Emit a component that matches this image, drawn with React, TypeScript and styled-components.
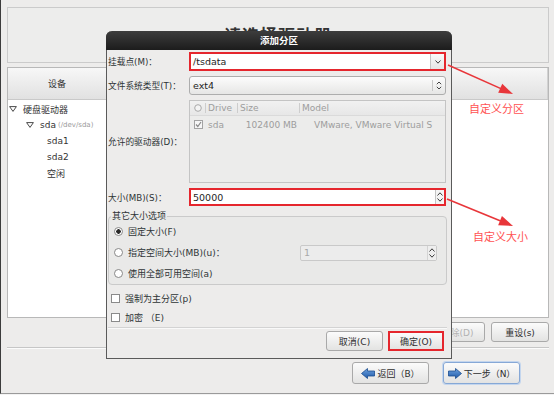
import React from 'react'
import styled, { createGlobalStyle } from 'styled-components'

const GlobalStyle = createGlobalStyle`
  html, body { margin: 0; padding: 0; background: #f3f3f3; }
  body {
    font-family: "DejaVu Sans", "Noto Sans CJK SC", sans-serif;
    font-size: 9px;
    color: #2e3436;
  }
  * { box-sizing: border-box; }
`

const CJK = `"DejaVu Sans", "Noto Sans CJK SC", sans-serif`
const RED = '#e5262d'

const Screen = styled.div`
  position: relative;
  width: 554px;
  height: 394px;
  padding: 7px 5px 0 6px;
  background: #edeceb;
  border-left: 1px solid #3c3c3c;
  border-bottom: 1px solid #9a9a9a;
  display: flex;
  flex-direction: column;
  overflow: hidden;
`

const Banner = styled.div`
  height: 56px;
  border: 1px solid #cbcbcb;
  background: #ededec;
  display: flex;
  justify-content: center;
  padding-top: 18px;
`

// sits behind the dialog, only its top edge peeks out
const BannerTitle = styled.h1`
  margin: 0;
  font: bold 17px/20px ${CJK};
  color: #333;
  letter-spacing: 1px;
`

const DevicePanel = styled.div`
  margin-top: 4px;
  height: 251px;
  border: 1px solid #b8b8b8;
  background: #fff;
  display: flex;
  flex-direction: column;
`

const TreeHeader = styled.div`
  height: 32px;
  flex: none;
  display: flex;
  background: linear-gradient(#f7f7f7, #e1e1e1);
  border-bottom: 1px solid #c9c9c9;
`

const HeaderCell = styled.div<{ $w?: number }>`
  width: ${p => (p.$w ? `${p.$w}px` : 'auto')};
  flex: ${p => (p.$w ? 'none' : '1')};
  display: flex;
  align-items: center;
  justify-content: center;
  border-right: 1px solid #d2d2d2;
  color: #333;
`

const TreeBody = styled.div`
  padding-top: 1px;
  display: flex;
  flex-direction: column;
`

const TreeRow = styled.div<{ $indent: number }>`
  height: 16px;
  display: flex;
  align-items: center;
  gap: 6px;
  padding-left: ${p => p.$indent}px;
  color: #333;
`

const DevPath = styled.span`
  font-size: 7px;
  color: #9a9a9a;
  margin-left: -4px;
`

const ActionRow = styled.div`
  margin-top: 4px;
  height: 20px;
  display: flex;
  justify-content: flex-end;
  gap: 6px;
`

const Separator = styled.div`
  margin-top: 5px;
  border-top: 1px solid #c6c6c6;
  border-bottom: 1px solid #fbfbfb;
`

const NavRow = styled.div`
  margin-top: 13px;
  height: 22px;
  display: flex;
  justify-content: flex-end;
  gap: 14px;
  padding-right: 29px;
`

const PushButton = styled.button<{ $w: number; $focus?: boolean; $mark?: boolean; $off?: boolean }>`
  width: ${p => p.$w}px;
  height: 100%;
  padding: 0;
  display: flex;
  align-items: center;
  justify-content: center;
  gap: 2px;
  font: 9px ${CJK};
  color: ${p => (p.$off ? '#b2b2b2' : '#2e2e2e')};
  background: linear-gradient(#fbfbfb, #e3e3e2);
  border: ${p => (p.$mark ? `2px solid ${RED}` : p.$focus ? '1px solid #86a8d6' : '1px solid #a9a9a9')};
  border-radius: ${p => (p.$mark ? '0' : '3px')};
  box-shadow: ${p => (p.$focus ? '0 0 0 1px #c4d6ee' : 'none')};
`

/* dialog */

const Dialog = styled.div`
  position: absolute;
  left: 105px;
  top: 31px;
  width: 346px;
  height: 328px;
  background: #edeceb;
  border: 1px solid #5a5a5a;
  border-top: none;
  border-radius: 6px 6px 0 0;
  display: flex;
  flex-direction: column;
`

const TitleBar = styled.div`
  height: 19px;
  flex: none;
  margin: 0 -1px;
  border-radius: 6px 6px 0 0;
  background: linear-gradient(#3d3d3d, #1c1c1c);
  color: #fff;
  font: bold 9.5px/19px ${CJK};
  text-align: center;
`

const DialogBody = styled.div`
  flex: 1;
  padding: 2px 4px 0 1px;
  display: flex;
  flex-direction: column;
`

const FormGrid = styled.div`
  display: grid;
  grid-template-columns: 81px 257px;
  grid-template-rows: 19px 19px 83px 18px;
  row-gap: 5px;
  align-items: center;
`

const FieldLabel = styled.label`
  white-space: nowrap;
  font-size: 8.7px;
  color: #2e3436;
`

const MarkedEntry = styled.div`
  height: 100%;
  display: flex;
  border: 2px solid ${RED};
  background: #fff;
`

const EntryText = styled.span`
  flex: 1;
  padding-left: 2px;
  display: flex;
  align-items: center;
  font-size: 9.5px;
  color: #1e1e1e;
`

const DropButton = styled.span`
  width: 14px;
  border-left: 1px solid #c4c4c4;
  background: linear-gradient(#fafafa, #e5e5e5);
  display: flex;
  align-items: center;
  justify-content: center;
`

const SpinColumn = styled.span<{ $off?: boolean }>`
  width: 9px;
  border-left: 1px solid ${p => (p.$off ? '#d3d3d3' : '#c4c4c4')};
  background: ${p => (p.$off ? '#eeeeee' : '#f4f4f4')};
  display: flex;
  flex-direction: column;
  align-items: center;
  justify-content: space-evenly;
`

const ComboButton = styled.div`
  height: 100%;
  display: flex;
  border: 1px solid #adadad;
  border-radius: 3px;
  background: linear-gradient(#fcfcfc, #e6e6e5);
`

const ComboValue = styled.span<{ $off?: boolean }>`
  flex: 1;
  padding-left: 3px;
  display: flex;
  align-items: center;
  font-size: 9.5px;
  color: ${p => (p.$off ? '#a8a8a8' : '#1e1e1e')};
`

const ComboArrows = styled.span`
  width: 13px;
  margin: 3px 0;
  border-left: 1px solid #c8c8c8;
  display: flex;
  align-items: center;
  justify-content: center;
`

const DriveTable = styled.div`
  height: 100%;
  border: 1px solid #c4c4c4;
  background: #ececeb;
  color: #9d9d9d;
  display: flex;
  flex-direction: column;
`

const DriveHead = styled.div`
  height: 15px;
  display: flex;
  border-bottom: 1px solid #dadada;
  background: linear-gradient(#f1f1f1, #e7e7e7);
`

const DriveRow = styled.div`
  height: 17px;
  display: flex;
`

const Cell = styled.span<{ $w?: number; $pad?: number; $right?: boolean; $center?: boolean; $sep?: boolean }>`
  width: ${p => (p.$w ? `${p.$w}px` : 'auto')};
  flex: ${p => (p.$w ? 'none' : '1')};
  display: flex;
  align-items: center;
  justify-content: ${p => (p.$center ? 'center' : p.$right ? 'flex-end' : 'flex-start')};
  padding: ${p => (p.$right ? `0 ${p.$pad ?? 2}px 0 0` : `0 0 0 ${p.$pad ?? 2}px`)};
  white-space: nowrap;
  overflow: hidden;
  border-right: ${p => (p.$sep ? '1px solid #cdcdcd' : 'none')};
  margin: ${p => (p.$sep ? '2px 0' : '0')};
`

const SizeFrame = styled.fieldset`
  margin: 5px 0 0;
  padding: 0 9px 1px 5px;
  border: 1px solid #cacaca;
  border-radius: 4px;
  background: #e9e9e8;
  display: grid;
  grid-auto-rows: 19px;
  row-gap: 2px;
`

const FrameLegend = styled.legend`
  margin-left: -3px;
  padding: 0 1px;
  line-height: 11px;
  color: #2e3436;
`

const OptionRow = styled.label`
  display: flex;
  align-items: center;
  gap: 5px;
`

const RadioDot = styled.span<{ $on?: boolean }>`
  width: 9px;
  height: 9px;
  border-radius: 50%;
  border: 1px solid #8a8a8a;
  background: radial-gradient(circle, ${p => (p.$on ? '#2a2a2a 0 2px' : '#fff 0 2px')}, #fff 2.5px);
  flex: none;
`

const CheckBox = styled.span`
  width: 9px;
  height: 9px;
  border: 1px solid #8a8a8a;
  background: #fff;
  flex: none;
`

const DisabledSpin = styled.div`
  margin-left: auto;
  width: 137px;
  height: 16px;
  display: flex;
  border: 1px solid #c9c9c9;
  border-radius: 2px;
  background: #ececec;
`

const CheckList = styled.div`
  margin-top: 4px;
  padding-left: 3px;
  display: grid;
  grid-auto-rows: 19px;
`

const DialogSep = styled.div`
  border-top: 1px solid #d3d3d3;
  border-bottom: 1px solid #f9f9f9;
`

const DialogButtons = styled.div`
  margin-top: 2px;
  height: 20px;
  display: flex;
  justify-content: flex-end;
  gap: 5px;
  padding-right: 3px;
`

/* annotations */

const Overlay = styled.svg`
  position: absolute;
  inset: 0;
  pointer-events: none;
`

const Note = styled.span<{ $x: number; $y: number }>`
  position: absolute;
  left: ${p => p.$x}px;
  top: ${p => p.$y}px;
  font: 11px "Noto Sans CJK SC", sans-serif;
  color: #ff5252;
`

function Chevron({ up }: { up?: boolean }) {
  return (
    <svg width="6" height="4" viewBox="0 0 6 4">
      <polyline
        points={up ? '0.5,3.5 3,0.8 5.5,3.5' : '0.5,0.5 3,3.2 5.5,0.5'}
        fill="none"
        stroke="#3a3a3a"
        strokeWidth="1"
      />
    </svg>
  )
}

function Expander() {
  return (
    <svg width="8" height="6" viewBox="0 0 8 6">
      <polygon points="0.6,0.6 7.4,0.6 4,5.4" fill="none" stroke="#4a4a4a" strokeWidth="1" />
    </svg>
  )
}

function BlueArrow({ dir }: { dir: 'left' | 'right' }) {
  const pts =
    dir === 'left'
      ? '0.5,5.5 6.5,0.5 6.5,3 13.5,3 13.5,8 6.5,8 6.5,10.5'
      : '13.5,5.5 7.5,0.5 7.5,3 0.5,3 0.5,8 7.5,8 7.5,10.5'
  return (
    <svg width="14" height="11" viewBox="0 0 14 11">
      <defs>
        <linearGradient id={`ba-${dir}`} x1="0" y1="0" x2="0" y2="1">
          <stop offset="0" stopColor="#6fa3e0" />
          <stop offset="1" stopColor="#1f5aa8" />
        </linearGradient>
      </defs>
      <polygon points={pts} fill={`url(#ba-${dir})`} stroke="#1b4b8e" strokeWidth="0.8" />
    </svg>
  )
}

function TinyCheck() {
  return (
    <svg width="9" height="9" viewBox="0 0 9 9">
      <rect x="0.5" y="0.5" width="8" height="8" fill="#f6f6f6" stroke="#a3a3a3" />
      <polyline points="2,4.5 3.8,6.5 7,2" fill="none" stroke="#8a8a8a" strokeWidth="1.2" />
    </svg>
  )
}

function HeadRadio() {
  return (
    <svg width="8" height="8" viewBox="0 0 8 8">
      <circle cx="4" cy="4" r="3.3" fill="#f4f4f4" stroke="#a9a9a9" />
    </svg>
  )
}

function RedArrow({ x1, y1, x2, y2 }: { x1: number; y1: number; x2: number; y2: number }) {
  const a = Math.atan2(y2 - y1, x2 - x1)
  const len = 14
  const half = 5
  const bx = x2 - len * Math.cos(a)
  const by = y2 - len * Math.sin(a)
  const px = -Math.sin(a) * half
  const py = Math.cos(a) * half
  return (
    <g>
      <line x1={x1} y1={y1} x2={bx + 2 * Math.cos(a)} y2={by + 2 * Math.sin(a)} stroke="#e8363a" strokeWidth="1.6" />
      <polygon
        points={`${x2},${y2} ${bx + px},${by + py} ${bx - px},${by - py}`}
        fill="#e8363a"
      />
    </g>
  )
}

export default function App() {
  return (
    <Screen>
      <GlobalStyle />
      <Banner>
        <BannerTitle>请选择驱动器</BannerTitle>
      </Banner>

      <DevicePanel>
        <TreeHeader>
          <HeaderCell $w={99}>设备</HeaderCell>
          <HeaderCell $w={120}>大小</HeaderCell>
          <HeaderCell>格式</HeaderCell>
        </TreeHeader>
        <TreeBody>
          <TreeRow $indent={1}>
            <Expander />
            <span>硬盘驱动器</span>
          </TreeRow>
          <TreeRow $indent={18}>
            <Expander />
            <span>sda</span>
            <DevPath>(/dev/sda)</DevPath>
          </TreeRow>
          <TreeRow $indent={39}>sda1</TreeRow>
          <TreeRow $indent={39}>sda2</TreeRow>
          <TreeRow $indent={39}>空闲</TreeRow>
        </TreeBody>
      </DevicePanel>

      <ActionRow>
        <PushButton $w={57}>创建(C)</PushButton>
        <PushButton $w={57}>编辑(E)</PushButton>
        <PushButton $w={55} $off>删除(D)</PushButton>
        <PushButton $w={58}>重设(s)</PushButton>
      </ActionRow>

      <Separator />

      <NavRow>
        <PushButton $w={77}>
          <BlueArrow dir="left" />
          返回（B）
        </PushButton>
        <PushButton $w={77} $focus>
          <BlueArrow dir="right" />
          下一步（N）
        </PushButton>
      </NavRow>

      <Dialog>
        <TitleBar>添加分区</TitleBar>
        <DialogBody>
          <FormGrid>
            <FieldLabel>挂载点(M)：</FieldLabel>
            <MarkedEntry>
              <EntryText>/tsdata</EntryText>
              <DropButton>
                <Chevron />
              </DropButton>
            </MarkedEntry>

            <FieldLabel>文件系统类型(T)：</FieldLabel>
            <ComboButton>
              <ComboValue>ext4</ComboValue>
              <ComboArrows>
                <svg width="6" height="9" viewBox="0 0 6 9">
                  <polyline points="0.8,3.2 3,1 5.2,3.2" fill="none" stroke="#444" />
                  <polyline points="0.8,5.8 3,8 5.2,5.8" fill="none" stroke="#444" />
                </svg>
              </ComboArrows>
            </ComboButton>

            <FieldLabel>允许的驱动器(D)：</FieldLabel>
            <DriveTable>
              <DriveHead>
                <Cell $w={16} $center $sep $pad={0}>
                  <HeadRadio />
                </Cell>
                <Cell $w={32} $sep>Drive</Cell>
                <Cell $w={62} $sep>Size</Cell>
                <Cell>Model</Cell>
              </DriveHead>
              <DriveRow>
                <Cell $w={16} $center $pad={0}>
                  <TinyCheck />
                </Cell>
                <Cell $w={32}>sda</Cell>
                <Cell $w={62} $right $pad={3}>102400 MB</Cell>
                <Cell $pad={14}>VMware, VMware Virtual S</Cell>
              </DriveRow>
            </DriveTable>

            <FieldLabel>大小(MB)(S)：</FieldLabel>
            <MarkedEntry>
              <EntryText>50000</EntryText>
              <SpinColumn>
                <Chevron up />
                <Chevron />
              </SpinColumn>
            </MarkedEntry>
          </FormGrid>

          <SizeFrame>
            <FrameLegend>其它大小选项</FrameLegend>
            <OptionRow>
              <RadioDot $on />
              固定大小(F)
            </OptionRow>
            <OptionRow>
              <RadioDot />
              指定空间大小(MB)(u)：
              <DisabledSpin>
                <ComboValue $off>1</ComboValue>
                <SpinColumn $off>
                  <Chevron up />
                  <Chevron />
                </SpinColumn>
              </DisabledSpin>
            </OptionRow>
            <OptionRow>
              <RadioDot />
              使用全部可用空间(a)
            </OptionRow>
          </SizeFrame>

          <CheckList>
            <OptionRow>
              <CheckBox />
              强制为主分区(p)
            </OptionRow>
            <OptionRow>
              <CheckBox />
              加密 （E)
            </OptionRow>
          </CheckList>

          <DialogSep />

          <DialogButtons>
            <PushButton $w={57}>取消(C)</PushButton>
            <PushButton $w={56} $mark>确定(O)</PushButton>
          </DialogButtons>
        </DialogBody>
      </Dialog>

      <Overlay width="553" height="394" viewBox="0 0 553 394">
        <RedArrow x1={447} y1={65} x2={512} y2={94} />
        <RedArrow x1={446} y1={199} x2={512} y2={226} />
      </Overlay>
      <Note $x={468} $y={100}>自定义分区</Note>
      <Note $x={472} $y={228}>自定义大小</Note>
    </Screen>
  )
}
